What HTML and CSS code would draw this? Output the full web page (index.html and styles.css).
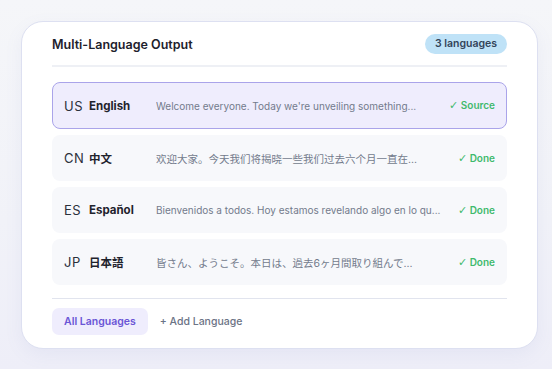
FILE: index.html
```html
<!DOCTYPE html>
<html lang="en">
<head>
    <meta charset="UTF-8">
    <meta name="viewport" content="width=device-width, initial-scale=1.0">
    <title>Multi-Language Output</title>
    <link rel="stylesheet" href="styles.css">
</head>
<body>
    <div class="output-card">
        <div class="card-header">
            <div class="card-title">Multi-Language Output</div>
            <span class="lang-count">3 languages</span>
        </div>

        <div class="lang-list">
            <div class="lang-row source">
                <span class="lang-flag">US</span>
                <span class="lang-name">English</span>
                <span class="lang-text">Welcome everyone. Today we're unveiling something...</span>
                <span class="lang-status"><span class="check">✓</span> Source</span>
            </div>
            <div class="lang-row">
                <span class="lang-flag">CN</span>
                <span class="lang-name">中文</span>
                <span class="lang-text cjk">欢迎大家。今天我们将揭晓一些我们过去六个月一直在...</span>
                <span class="lang-status"><span class="check">✓</span> Done</span>
            </div>
            <div class="lang-row">
                <span class="lang-flag">ES</span>
                <span class="lang-name">Español</span>
                <span class="lang-text">Bienvenidos a todos. Hoy estamos revelando algo en lo qu...</span>
                <span class="lang-status"><span class="check">✓</span> Done</span>
            </div>
            <div class="lang-row">
                <span class="lang-flag">JP</span>
                <span class="lang-name">日本語</span>
                <span class="lang-text cjk">皆さん、ようこそ。本日は、過去6ヶ月間取り組んで...</span>
                <span class="lang-status"><span class="check">✓</span> Done</span>
            </div>
        </div>

        <div class="card-footer">
            <button class="tab-btn active">All Languages</button>
            <button class="tab-btn">+ Add Language</button>
        </div>
    </div>
</body>
</html>
```

FILE: styles.css
```css
body {
    font-family: Inter, "Noto Sans CJK SC", sans-serif;
    background: linear-gradient(180deg, #f5f6f9 0%, #f1f2f8 60%, #eeeef8 100%);
    margin: 0;
    height: 369px;
    padding: 21px 0 0 21px;
    box-sizing: border-box;
    overflow: hidden;
}
.output-card {
    width: 517px;
    box-sizing: border-box;
    background-color: white;
    border: 1px solid #dde0f1;
    border-radius: 22px;
    padding: 12px 30px 13px;
    box-shadow: 0 6px 18px rgba(120, 125, 190, 0.08);
}
.card-header {
    display: flex;
    justify-content: space-between;
    align-items: center;
    height: 20px;
    padding-bottom: 11px;
    border-bottom: 2px solid #eef0f5;
}
.card-title {
    font-size: 12.5px;
    font-weight: 600;
    color: #1d212c;
}
.lang-count {
    background-color: #bfe2f7;
    color: #33445a;
    font-size: 10.5px;
    font-weight: 600;
    line-height: 20px;
    padding: 0 10px;
    border-radius: 10px;
}
.lang-list {
    display: flex;
    flex-direction: column;
    gap: 6px;
    padding: 15px 0 13px;
    border-bottom: 1px solid #e1e4ee;
}
.lang-row {
    display: grid;
    grid-template-columns: 25px 67px 1fr auto;
    align-items: center;
    height: 46px;
    box-sizing: border-box;
    padding: 0 12px;
    background-color: #f7f8fb;
    border-radius: 8px;
}
.lang-row.source {
    height: 47px;
    background-color: #efedfd;
    border: 1px solid #aaa4ea;
    padding: 0 11px;
}
.lang-flag {
    font-size: 13px;
    color: #2b303b;
    letter-spacing: 0.5px;
}
.lang-name {
    font-size: 11.5px;
    font-weight: 700;
    color: #1f232d;
}
.lang-text {
    font-size: 10px;
    color: #737b8c;
    white-space: nowrap;
    overflow: hidden;
    padding-right: 12px;
}
.lang-text.cjk {
    font-size: 10.5px;
}
.lang-status {
    font-size: 10px;
    font-weight: 600;
    color: #3fba6d;
}
.check {
    font-family: "DejaVu Sans", sans-serif;
    font-weight: 400;
    font-size: 11px;
}
.card-footer {
    display: flex;
    align-items: center;
    padding-top: 9px;
}
.tab-btn {
    font-family: inherit;
    font-size: 10.5px;
    font-weight: 500;
    color: #6b7385;
    background: none;
    border: none;
    border-radius: 7px;
    height: 27px;
    padding: 0 12px;
    cursor: pointer;
}
.tab-btn.active {
    background-color: #efedfd;
    color: #6a55d6;
    font-weight: 600;
}
```
